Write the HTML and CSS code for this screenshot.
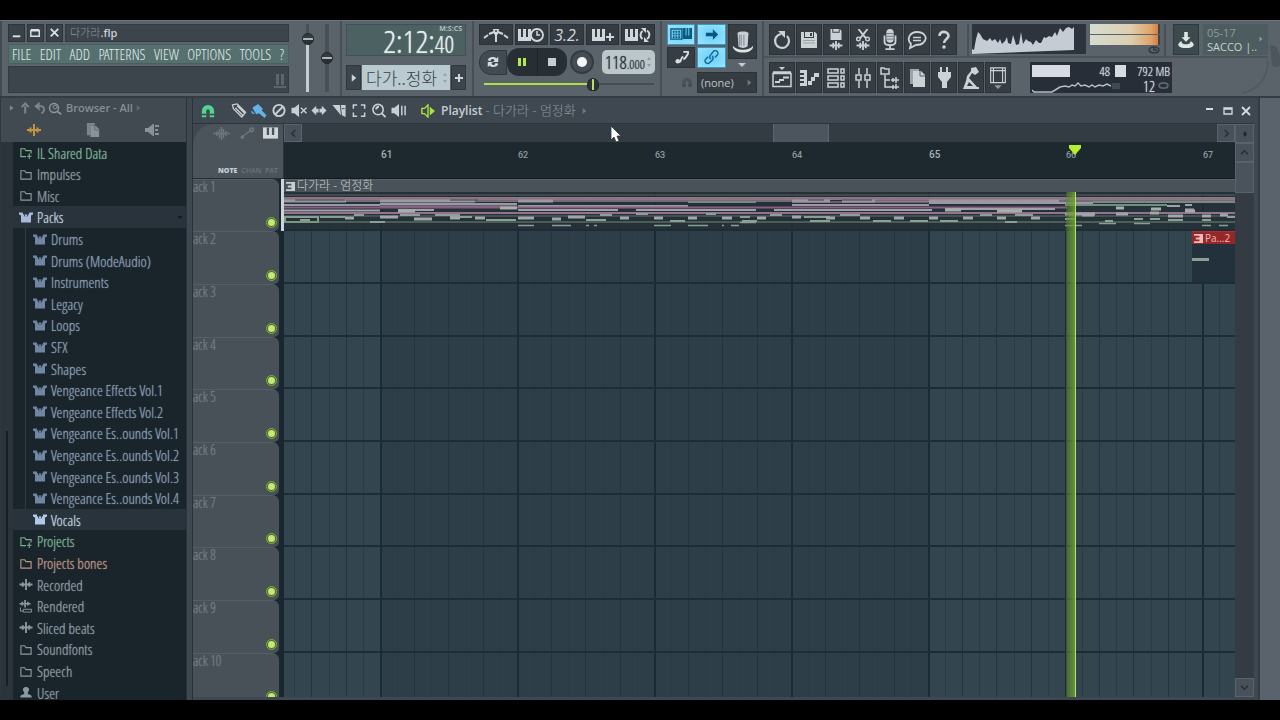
FILE: index.html
```html
<!DOCTYPE html>
<html lang="ko">
<head>
<meta charset="utf-8">
<title>다가라.flp</title>
<link rel="stylesheet" href="styles.css">
</head>
<body>
<svg class="defs" aria-hidden="true">
  <defs>
    <symbol id="folder" viewBox="0 0 14 14"><path d="M1.500 3h4l1.500 2h5.500v7h-11z" fill="none" stroke="currentColor" stroke-width="1.200"/></symbol>
    <symbol id="folderplus" viewBox="0 0 14 14"><path d="M7 11.500H1.500V3h4L7 5h5.500v3M10.500 8v6M8 11h5" fill="none" stroke="currentColor" stroke-width="1.200"/></symbol>
    <symbol id="box" viewBox="0 0 14 12"><path d="M0 1h4l1 2h4l1-2h4v2l-2 1v7H2V4L0 3z" fill="currentColor"/><path d="M4 1l2 4M10 1L8 5" stroke="#1a242b" stroke-width=".8"/></symbol>
    <symbol id="wave" viewBox="0 0 14 14"><path d="M0 7h14M3.500 4.500v5M7 1v12M10.500 4.500v5" fill="none" stroke="currentColor" stroke-width="2"/></symbol>
    <symbol id="rendered" viewBox="0 0 14 14"><path d="M0 4h12M3 2v4M6 0v8M9 2v4" fill="none" stroke="currentColor" stroke-width="1.800"/><path d="M4 10h9v3H4zM1 8v4h3" fill="none" stroke="currentColor"/></symbol>
    <symbol id="user" viewBox="0 0 14 14"><path d="M7 1a3 3 0 0 1 2 5.500v2l3.500 1.500 1 2.500H.5l1-2.500L5 8.500v-2A3 3 0 0 1 7 1z" fill="currentColor"/></symbol>
    <symbol id="piano" viewBox="0 0 16 12"><path d="M0 0h16v12H0z" fill="currentColor"/><path d="M4 0h2.500v8H4zM9.500 0H12v8H9.500z" fill="#4b545c"/></symbol>
    <symbol id="clipicon" viewBox="0 0 10 10"><path d="M0 0h10v10H0V8h6V6H2V4h4V2H0z" fill="currentColor"/></symbol>
    <symbol id="magnet" viewBox="0 0 16 16"><path d="M1 15V8a7 7 0 0 1 14 0v7h-5V8a2 2 0 0 0-4 0v7z" fill="currentColor"/><path d="M1 12h5M10 12h5" stroke="#3c454d" stroke-width="1.500"/></symbol>
  </defs>
</svg>
<div class="app">
  <header class="toolbar">
    <section class="group main-panel">
      <div class="title-row">
        <button class="win-btn" aria-label="Minimize"><svg viewBox="0 0 16 16"><path d="M4 11h8" stroke="currentColor" stroke-width="2"/></svg></button>
        <button class="win-btn" aria-label="Maximize"><svg viewBox="0 0 16 16"><path d="M3 5h9v6H3zM3 4h9" fill="none" stroke="currentColor" stroke-width="1.500"/></svg></button>
        <button class="win-btn" aria-label="Close"><svg viewBox="0 0 16 16"><path d="M4 3l8 8M12 3l-8 8" stroke="currentColor" stroke-width="1.800"/></svg></button>
        <div class="file-title"><span class="ko">다가라</span><b>.flp</b></div>
      </div>
      <nav class="menu">
        <button>FILE</button><button>EDIT</button><button>ADD</button><button>PATTERNS</button><button>VIEW</button><button>OPTIONS</button><button>TOOLS</button><button>?</button>
      </nav>
      <div class="hint"><svg viewBox="0 0 14 16" width="14" height="16"><path d="M3 1h3v11H3zM8 1h3v11H8zM1 13h12v2H1z" fill="#5c656b"/></svg></div>
    </section>
    <section class="group faders">
      <input type="range" class="fader" value="84" aria-label="Main volume">
      <input type="range" class="fader plain" value="50" aria-label="Main pitch">
    </section>
    <section class="group time-panel">
      <div class="clock"><span class="unit">M:S:CS</span><span class="big">2:12:</span><span class="small">40</span></div>
      <div class="pattern">
        <button class="side" aria-label="Pattern menu"><svg viewBox="0 0 8 10" width="6" height="8"><path d="M1 0l6 5-6 5z" fill="currentColor"/></svg></button>
        <button class="pattern-name">다가..정화<svg viewBox="0 0 6 12" width="6" height="12"><path d="M3 1l2 3H1zM3 11l2-3H1z" fill="#93a5a9"/></svg></button>
        <button class="side" aria-label="Add pattern"><svg viewBox="0 0 8 8" width="8" height="8"><path d="M4 0v8M0 4h8" stroke="currentColor" stroke-width="2"/></svg></button>
      </div>
    </section>
    <section class="group transport">
      <div class="modes">
        <button aria-label="Metronome"><svg viewBox="0 0 26 16"><path d="M1 11l4-3M6 7l5-2M15 5l5 2M21 8l4 3M13 7v8" fill="none" stroke="currentColor" stroke-width="2"/><path d="M10 2h6l-1 5-2 2-2-2z" fill="currentColor"/><circle cx="13" cy="4" r="1" fill="#343c42"/></svg></button>
        <button aria-label="Wait for input"><svg viewBox="0 0 26 16"><path d="M0 2h3v8h2V2h3v8h2V2h3v12H0z" fill="currentColor"/><circle cx="19" cy="8" r="6" fill="#343c42" stroke="currentColor" stroke-width="1.800"/><path d="M19 4v4h3" fill="none" stroke="currentColor" stroke-width="1.500"/></svg></button>
        <button class="count" aria-label="Countdown">3.2.</button>
        <button aria-label="Blend notes"><svg viewBox="0 0 26 16"><path d="M2 2h3v8h2V2h3v8h2V2h3v12H2zM19 6h2v3h3v2h-3v3h-2v-3h-3V9h3z" fill="currentColor"/></svg></button>
        <button aria-label="Loop record"><svg viewBox="0 0 26 16"><path d="M0 2h3v8h2V2h3v8h2V2h3v12H0z" fill="currentColor"/><path d="M17.500 12a5 5 0 0 1 0-8M22 3.500a5 5 0 0 1 0 8.500" fill="none" stroke="currentColor" stroke-width="2"/><path d="M16 1h5v5zM24 15h-5v-5z" fill="currentColor"/></svg></button>
      </div>
      <div class="playrow">
        <button class="loop" aria-label="Pattern or song"><svg viewBox="0 0 16 16" width="14" height="14"><path d="M2 6c1-4 7-5 10-2l2-2v6H8l2-2C8 4 6 4 5 7zM14 10c-1 4-7 5-10 2l-2 2V8h6l-2 2c2 2 4 2 5-1z" fill="#d5dcdf"/></svg></button>
        <div class="playstop">
          <button aria-label="Pause"><svg viewBox="0 0 8 8" width="8" height="8"><path d="M0 0h3v8H0zM5 0h3v8H5z" fill="#b4ea4a"/></svg></button>
          <button aria-label="Stop"><svg viewBox="0 0 8 8" width="8" height="8"><path d="M0 0h8v8H0z" fill="#c8cfd3"/></svg></button>
        </div>
        <button class="record" aria-label="Record"><svg viewBox="0 0 10 10" width="10" height="10"><circle cx="5" cy="5" r="5" fill="#f4f7f8"/></svg></button>
        <button class="tempo" aria-label="Tempo">118<small>.000</small><svg viewBox="0 0 6 12" width="6" height="12"><path d="M3 1l2 3H1zM3 11l2-3H1z" fill="#8f9ca2"/></svg></button>
      </div>
      <input class="song-pos" type="range" value="65" aria-label="Song position">
    </section>
    <section class="group links">
      <div class="link-grid">
        <button class="lit" aria-label="Typing keyboard"><svg viewBox="0 0 24 14" width="22" height="13"><path d="M1 1h12v11H1z" fill="none" stroke="#0c5a80" stroke-width="1.500"/><path d="M3 4h9M3 7h9M3 10h9" stroke="#0c5a80" stroke-width="2" stroke-dasharray="2 1"/><path d="M14 0h3v8h1V0h2v8h1V0h3v12H14z" fill="#0c5a80"/></svg></button>
        <button class="lit" aria-label="Auto-scroll"><svg viewBox="0 0 16 12" width="14" height="11"><path d="M1 4h8V0l6 6-6 6V8H1z" fill="#085581"/></svg></button>
        <button class="hat" aria-label="Tips"><svg viewBox="0 0 24 26" width="22" height="24"><path d="M6 3c3-2 9-2 12 0l-1 15c-3 2-7 2-10 0z" fill="#c9d0d3"/><path d="M8 5v12M10 5v12M13 5v12" stroke="#798087"/><path d="M1 17c-1 10 23 10 22 0-4 6-18 6-22 0z" fill="#dde2e4"/></svg></button>
        <button aria-label="Glide"><svg viewBox="0 0 16 14" width="15" height="13"><circle cx="4" cy="11" r="2.500" fill="#d8dee1"/><path d="M5 12c4 0 1-5 5-6M10 1h5v2c-1 1-2 5-5 6" fill="none" stroke="#d8dee1" stroke-width="2"/></svg></button>
        <button class="lit" aria-label="Link"><svg viewBox="0 0 18 18" width="15" height="15"><path d="M8 11l-1-2a3 3 0 0 1 1-3l3-4a3 3 0 0 1 5 4l-3 3M10 7l1 3-1 2-3 3a3 3 0 0 1-5-4l3-3" fill="none" stroke="#126a95" stroke-width="1.700"/></svg></button>
      </div>
      <div class="snap-row">
        <svg class="dim-magnet" width="12" height="11"><use href="#magnet"/></svg>
        <button class="snap">(none)<svg viewBox="0 0 8 10" width="5" height="7"><path d="M1 0l6 5-6 5z" fill="#6d777d"/></svg></button>
      </div>
    </section>
    <section class="group right-side">
      <div class="upper">
        <div class="iconrow">
          <button aria-label="Undo"><svg viewBox="0 0 20 20"><path d="M9 4a7 7 0 1 0 6 2" fill="none" stroke="currentColor" stroke-width="2.200"/><path d="M6 1h7v7z" fill="currentColor"/></svg></button>
          <button aria-label="Save"><svg viewBox="0 0 20 20"><path d="M2 2h3v6h10V2h1l2 2v14H2z" fill="currentColor"/><path d="M6 2h8v5H6z" fill="currentColor"/><path d="M11 3h2v3h-2z" fill="#3a4248"/><path d="M4 10.500h12M4 13h12" stroke="#9aa3a8"/></svg></button>
          <button aria-label="Save new version"><svg viewBox="0 0 20 24"><path d="M4 0h2v4h8V0l2 2v10H4z" fill="currentColor"/><path d="M7 0h6v3H7z" fill="currentColor"/><path d="M3 18h14M7 15v6M10 13v10M13 15v6" stroke="currentColor" stroke-width="2"/></svg></button>
          <button aria-label="Cut audio"><svg viewBox="0 0 20 24"><path d="M5 0l8 10M15 0L7 10" stroke="currentColor" stroke-width="2"/><circle cx="5" cy="11" r="2" fill="none" stroke="currentColor" stroke-width="1.500"/><circle cx="15" cy="11" r="2" fill="none" stroke="currentColor" stroke-width="1.500"/><path d="M3 18h14M7 15v6M10 13v10M13 15v6" stroke="currentColor" stroke-width="2"/></svg></button>
          <button aria-label="Record audio"><svg viewBox="0 0 20 24"><rect x="6" y="0" width="8" height="15" rx="4" fill="currentColor"/><path d="M6 5h8M6 8h8M6 11h8" stroke="#69727a"/><path d="M4 7v7c0 5 12 5 12 0V7M10 18v3M5 22h10" fill="none" stroke="currentColor" stroke-width="2"/></svg></button>
          <button aria-label="Messages"><svg viewBox="0 0 20 20"><path d="M4 14C-1 9 3 2 10 2s12 6 6 11c-2 2-5 2-7 2l-6 3z" fill="none" stroke="currentColor" stroke-width="1.800"/><path d="M6 7.500h8M6 10.500h8" stroke="currentColor" stroke-width="1.500"/></svg></button>
          <button aria-label="Help"><svg viewBox="0 0 20 20"><path d="M5.500 6c0-6 9-5 9 0 0 3-4.500 3-4.500 7" fill="none" stroke="currentColor" stroke-width="2.600"/><circle cx="10" cy="17" r="1.800" fill="currentColor"/></svg></button>
        </div>
        <div class="monitor">
          <svg class="spectrum" viewBox="0 0 114 30"><path d="M0 30V25l2 1 2-11 2-7 2 2 3 5 4 2 3-3 2 3 3-2 3 4 2-4 2 5 3-3 2-4 1 6 3 1 2-9 2 6 1 4 3-1 2-12 2 12 3-5 2 2 3 1 2 3 3-5 3 3 2 0 3-6 2 1 3-2 3 1 3-5 2 4 3-8 3 4 3-4 3-1 3 2 2-2v23z" fill="#c5ccd4"/></svg>
          <div class="meters"><i></i><i></i><svg viewBox="0 0 12 8" width="12" height="8"><path d="M1 4c1-4 9-4 10 0-1 4-9 4-10 0M6 1v3h3" fill="none" stroke="#333b42" stroke-width="1.500"/></svg></div>
        </div>
        <div class="news">
          <button class="download" aria-label="Download"><svg viewBox="0 0 20 22" width="18" height="20"><path d="M8 2h4v6h3l-5 5-5-5h3z" fill="currentColor"/><path d="M5 12c-8 5-1 8 5 8s13-3 5-8c1 5-11 5-10 0z" fill="currentColor"/></svg></button>
          <button class="news-text"><span class="date">05-17</span><span>SACCO |..</span><svg viewBox="0 0 8 10" width="4" height="6"><path d="M1 0l6 5-6 5z" fill="#8c999d"/></svg></button>
        </div>
      </div>
      <div class="lower">
        <div class="iconrow">
          <button aria-label="Playlist"><svg viewBox="0 0 20 22"><path d="M7 0h6l-3 3z" fill="currentColor"/><path d="M1 6.500h18v13H1zM1 5h18" fill="none" stroke="currentColor" stroke-width="1.500"/><path d="M3 15h5M7 13h5M11 10.500h6" stroke="currentColor" stroke-width="2"/></svg></button>
          <button aria-label="Piano roll"><svg viewBox="0 0 20 22"><path d="M1 3h7v16H1v-3h4v-2H1v-2h4v-2H1V8h4V6H1z" fill="currentColor"/><path d="M9 16h4M12 12h4M15 8h5" stroke="currentColor" stroke-width="4"/></svg></button>
          <button aria-label="Channel rack"><svg viewBox="0 0 20 22"><path d="M2 2h10v4H2zM2 9h10v4H2zM2 16h10v4H2zM15 2h3v4h-3zM15 9h3v4h-3zM15 16h3v4h-3z" fill="none" stroke="currentColor" stroke-width="1.500"/></svg></button>
          <button aria-label="Mixer"><svg viewBox="0 0 20 22"><path d="M6 1v6M6 14v7M14 1v6M14 14v7M3 8h5v5H3zM12 8h5v5h-5z" fill="none" stroke="currentColor" stroke-width="1.500"/></svg></button>
          <button aria-label="Browser"><svg viewBox="0 0 20 22"><path d="M1 1h3l1 1h4v5H1zM5 8v12h6M5 13h5" fill="none" stroke="currentColor" stroke-width="1.500"/><path d="M11 13h8M13 11v4M16 10v6M11 20h8M13 18v4M16 17v5" stroke="currentColor" stroke-width="1.500"/></svg></button>
          <button aria-label="Project picker"><svg viewBox="0 0 20 22"><path d="M3 2h9v3H7v12H3z" fill="#9da5aa"/><path d="M6 4h8l4 4v12H6z" fill="currentColor"/><path d="M13 4v5h5" fill="none" stroke="#59626a"/></svg></button>
          <button aria-label="Plugin picker"><svg viewBox="0 0 20 22"><path d="M6 0h2v5h4V0h2v5h3v5l-4 5v6H8v-6l-4-5V5h2z" fill="currentColor"/></svg></button>
          <button aria-label="Tempo tapper"><svg viewBox="0 0 20 22"><path d="M10 1l5-1 3 5-4 3-3-2-3 5 8 9h2v2H2l3-8 1-5 4-5z" fill="currentColor"/><path d="M6 19l2-4 4 4z" fill="#363e44"/></svg></button>
          <button aria-label="Touch control"><svg viewBox="0 0 20 24"><path d="M2 1h16v16H2zM5 1v16M15 1v16M2 4h16" fill="none" stroke="currentColor" stroke-width="1.200"/><path d="M6 20h8l-4 4z" fill="#939ba0"/></svg></button>
        </div>
        <div class="cpu">
          <div class="cpu-line"><i class="bar"></i><span>48</span><i class="mem"></i><span class="mb">792 MB</span></div>
          <div class="cpu-line"><svg viewBox="0 0 80 14" width="80" height="14"><path d="M0 11l2 2h18l8-5 5-1 4 1 3-2 3 1 3-3 3 3 4-1 4 2 3-2 3 2 4-2 4 1 4-2 4 2" fill="none" stroke="#b4bdc5" stroke-width="1.500"/></svg><svg viewBox="0 0 8 6" width="8" height="6"><path d="M0 1h8M0 3h8M0 5h8" stroke="#59646c"/></svg><span class="voices">12</span><svg viewBox="0 0 14 8" width="13" height="7"><path d="M2 4c0-4 10-4 10 0s-10 4-10 0" fill="none" stroke="#5c6972" stroke-width="2"/></svg></div>
        </div>
      </div>
      <svg class="edge" viewBox="0 0 40 60" width="40" height="60"><path d="M30 10c6 0 10 4 10 18 0 6-5 4-8 2z" fill="#4d565d"/><path d="M28 26C28 44 16 56 2 58" fill="none" stroke="#4f585f" stroke-width="1.500"/></svg>
    </section>
  </header>

  <main class="workspace">
    <aside class="browser">
      <div class="browser-head">
        <svg viewBox="0 0 60 14" width="54" height="14"><path d="M1 4l4 3-4 3z" fill="#7b858b"/><path d="M18 13V5M14 6l4-4 4 4" fill="none" stroke="#7b858b" stroke-width="2.200"/><path d="M31 5h4c5 0 5 6 1 8" fill="none" stroke="#7b858b" stroke-width="2"/><path d="M34 0v10l-6-5z" fill="#7b858b"/><circle cx="50" cy="7" r="5" fill="none" stroke="#8d979d" stroke-width="1.600"/><circle cx="51" cy="6" r="2" fill="none" stroke="#8d979d"/><path d="M54 11l4 3" stroke="#8d979d" stroke-width="2"/></svg>
        <span>Browser - All</span>
        <svg viewBox="0 0 8 10" width="5" height="6"><path d="M1 0l6 5-6 5z" fill="#5f696f"/></svg>
      </div>
      <div class="browser-tabs">
        <button class="gold" aria-label="Sounds"><svg width="14" height="14"><use href="#wave"/></svg></button>
        <button aria-label="Files"><svg viewBox="0 0 16 18" width="14" height="16"><path d="M1 1h9v3H5v11H1z" fill="#7a848a"/><path d="M5 4h6l4 4v9H5z" fill="currentColor"/><path d="M10 4v5h5" fill="none" stroke="#59626a"/></svg></button>
        <button aria-label="Plugins"><svg viewBox="0 0 16 14" width="16" height="14"><path d="M0 5h3l5-4h1v12H8L3 9H0zM10 2h4v2h-4zM10 6h3v2h-3zM10 10h4v2h-4z" fill="currentColor"/></svg></button>
      </div>
      <div class="browser-body">
        <div class="browser-scroll"><i></i></div>
        <ul class="tree">
          <li class="green"><svg><use href="#folderplus"/></svg><span>IL Shared Data</span></li>
          <li><svg><use href="#folder"/></svg><span>Impulses</span></li>
          <li><svg><use href="#folder"/></svg><span>Misc</span></li>
          <li class="selected"><svg><use href="#box"/></svg><span>Packs</span><em></em></li>
          <li class="child"><svg><use href="#box"/></svg><span>Drums</span></li>
          <li class="child"><svg><use href="#box"/></svg><span>Drums (ModeAudio)</span></li>
          <li class="child"><svg><use href="#box"/></svg><span>Instruments</span></li>
          <li class="child"><svg><use href="#box"/></svg><span>Legacy</span></li>
          <li class="child"><svg><use href="#box"/></svg><span>Loops</span></li>
          <li class="child"><svg><use href="#box"/></svg><span>SFX</span></li>
          <li class="child"><svg><use href="#box"/></svg><span>Shapes</span></li>
          <li class="child"><svg><use href="#box"/></svg><span>Vengeance Effects Vol.1</span></li>
          <li class="child"><svg><use href="#box"/></svg><span>Vengeance Effects Vol.2</span></li>
          <li class="child"><svg><use href="#box"/></svg><span>Vengeance Es..ounds Vol.1</span></li>
          <li class="child"><svg><use href="#box"/></svg><span>Vengeance Es..ounds Vol.2</span></li>
          <li class="child"><svg><use href="#box"/></svg><span>Vengeance Es..ounds Vol.3</span></li>
          <li class="child"><svg><use href="#box"/></svg><span>Vengeance Es..ounds Vol.4</span></li>
          <li class="child selected"><svg><use href="#box"/></svg><span>Vocals</span></li>
          <li class="green"><svg><use href="#folderplus"/></svg><span>Projects</span></li>
          <li class="orange"><svg><use href="#folder"/></svg><span>Projects bones</span></li>
          <li><svg><use href="#wave"/></svg><span>Recorded</span></li>
          <li><svg><use href="#rendered"/></svg><span>Rendered</span></li>
          <li><svg><use href="#wave"/></svg><span>Sliced beats</span></li>
          <li><svg><use href="#folder"/></svg><span>Soundfonts</span></li>
          <li><svg><use href="#folder"/></svg><span>Speech</span></li>
          <li><svg><use href="#user"/></svg><span>User</span></li>
        </ul>
      </div>
    </aside>

    <section class="playlist">
      <div class="pl-head">
        <button class="mint" aria-label="Snap"><svg width="14" height="14" viewBox="0 0 16 16"><use href="#magnet"/></svg></button>
        <div class="tools">
          <button aria-label="Draw"><svg viewBox="0 0 16 16"><path d="M1 2l5-1 9 9-4 5-9-9zM4 5l8 8M6 3l8 8" fill="none" stroke="currentColor" stroke-width="1.400"/></svg></button>
          <button class="blue" aria-label="Paint"><svg viewBox="0 0 16 16"><path d="M1 5l6-4 5 5-1 2 5 5-2 3-6-5-3 1zM0 8l4 4-4-1z" fill="currentColor"/></svg></button>
          <button aria-label="Delete"><svg viewBox="0 0 16 16"><circle cx="8" cy="8" r="6" fill="none" stroke="currentColor" stroke-width="2"/><path d="M4 12l8-8" stroke="currentColor" stroke-width="2"/></svg></button>
          <button aria-label="Mute"><svg viewBox="0 0 16 16"><path d="M0 5h3l5-4v14l-5-4H0z" fill="currentColor"/><path d="M10 5l6 6M16 5l-6 6" stroke="currentColor" stroke-width="1.500"/></svg></button>
          <button aria-label="Slip"><svg viewBox="0 0 16 16"><path d="M0 8l5-5v3h6V3l5 5-5 5v-3H5v3z" fill="currentColor"/><path d="M8 4v8" stroke="#3f4850"/></svg></button>
          <button aria-label="Slice"><svg viewBox="0 0 16 16"><path d="M1 2h8l1 11zM10 2h5v13l-4-2z" fill="currentColor"/><path d="M11 6h3" stroke="#3f4850"/></svg></button>
          <button aria-label="Select"><svg viewBox="0 0 16 16"><path d="M2 6V2h4M10 2h4v4M14 10v4h-4M6 14H2v-4" fill="none" stroke="currentColor" stroke-width="1.600"/></svg></button>
          <button aria-label="Zoom"><svg viewBox="0 0 16 16"><circle cx="7" cy="7" r="5.500" fill="none" stroke="currentColor" stroke-width="1.700"/><path d="M5 7a3 3 0 0 1 3-3M11 11l4 4" fill="none" stroke="currentColor" stroke-width="2"/></svg></button>
          <button aria-label="Play selection"><svg viewBox="0 0 16 16"><path d="M0 5h3l5-4v14l-5-4H0z" fill="currentColor"/><path d="M11 3v10M14.500 3v10" stroke="currentColor" stroke-width="1.600"/></svg></button>
        </div>
        <svg class="lime" viewBox="0 0 16 16" width="14" height="14"><path d="M1 5h3l4-4v14l-4-4H1z" fill="none" stroke="currentColor" stroke-width="1.600"/><path d="M10 3l6 5-6 5z" fill="currentColor"/></svg>
        <h1>Playlist <span>- 다가라 - 엄정화</span></h1>
        <svg viewBox="0 0 8 10" width="5" height="6"><path d="M1 0l6 5-6 5z" fill="#6c777d"/></svg>
        <div class="pl-window">
          <button aria-label="Minimize"><svg viewBox="0 0 10 10"><path d="M1 3h7" stroke="currentColor" stroke-width="2"/></svg></button>
          <button aria-label="Maximize"><svg viewBox="0 0 10 10"><path d="M1 2h8v6H1zM1 3h8" fill="none" stroke="currentColor" stroke-width="1.300"/></svg></button>
          <button aria-label="Close"><svg viewBox="0 0 10 10"><path d="M1 1l8 8M9 1L1 9" stroke="currentColor" stroke-width="1.800"/></svg></button>
        </div>
      </div>
      <div class="pl-body">
        <div class="corner">
          <div class="corner-icons">
            <svg width="17" height="13" viewBox="0 0 17 13"><path d="M0 6.500h17M4 4v5M6.500 2v9M8.500 0v13M10.500 2v9M13 4v5" stroke="currentColor" stroke-width="1.500"/></svg>
            <svg viewBox="0 0 16 14" width="16" height="13"><path d="M2 11L13 3" stroke="currentColor" stroke-width="1.500"/><circle cx="3" cy="11" r="2" fill="currentColor"/><circle cx="13" cy="3" r="2" fill="none" stroke="currentColor" stroke-width="1.500"/></svg>
            <svg class="on" width="15" height="12"><use href="#piano"/></svg>
          </div>
          <div class="corner-modes"><b>NOTE</b><span>CHAN</span><span>PAT</span></div>
        </div>
        <div class="hscroll">
          <button aria-label="Scroll left"><svg viewBox="0 0 8 10" width="7" height="9"><path d="M6 1L2 5l4 4" fill="none" stroke="#252d35" stroke-width="1.500"/></svg></button>
          <div class="hbar"><i></i></div>
          <button aria-label="Scroll right"><svg viewBox="0 0 8 10" width="7" height="9"><path d="M2 1l4 4-4 4" fill="none" stroke="#252d35" stroke-width="1.500"/></svg></button>
        </div>
        <button class="dot" aria-label="Zoom"><svg viewBox="0 0 4 6" width="4" height="6"><path d="M2 0l2 3-2 3-2-3z" fill="#20272e"/></svg></button>
        <div class="ruler"><b>61</b><span>62</span><span>63</span><span>64</span><b>65</b><span>66</span><span>67</span>
          <svg class="marker" viewBox="0 0 14 10" width="14" height="10"><path d="M1 0h12v3L7 10 1 3z" fill="#b5f02c"/></svg>
        </div>
        <div class="vscroll">
          <button aria-label="Scroll up"><svg viewBox="0 0 10 8" width="9" height="7"><path d="M1 6l4-4 4 4" fill="none" stroke="#252d35" stroke-width="1.500"/></svg></button>
          <i></i>
          <button class="down" aria-label="Scroll down"><svg viewBox="0 0 10 8" width="9" height="7"><path d="M1 2l4 4 4-4" fill="none" stroke="#252d35" stroke-width="1.500"/></svg></button>
        </div>
        <div class="tracks">
          <div class="track"><div class="head"><span>ack 1</span><button class="led" aria-label="Mute track 1"></button></div>
            <div class="lane first">
              <div class="clip">
                <div class="clip-title"><svg width="9" height="9" viewBox="0 0 10 10"><use href="#clipicon"/></svg>다가라 - 엄정화</div>
                <svg class="notes" viewBox="284 192 951 38" width="951" height="38">
                  <path d="M284 195h951" stroke="#59655b"/>
                  <path d="M284 198.500h951" stroke="#8d7585" stroke-width="3"/>
                  <path d="M284 201h62M380 201h95M518 201h35M792 201h38M842 201h33M929 201h130" stroke="#9b979e" stroke-width="3"/>
                  <path d="M346 201h34M475 201h43M553 201h239M875 201h54M1059 201h176" stroke="#736c78" stroke-width="2"/>
                  <path d="M295 200h50M450 200h28M808 200h16M842 200h30" stroke="#3d444b"/>
                  <path d="M284 205h96M380 204h137M518 206h170M792 205h137M929 203h164" stroke="#969ba0" stroke-width="2"/>
                  <path d="M688 202h68M1065 205h102M1093 202h142" stroke="#768c7e" stroke-width="2"/>
                  <path d="M284 207.500h783" stroke="#865f80" stroke-width="2"/>
                  <path d="M284 210.500h96M398 210h36M518 210h100M636 210h120M774 210h18M792 210h140M945 209h110M1167 206h13M1185 205h7" stroke="#a1a0a8" stroke-width="2"/>
                  <path d="M380 206h137M792 202h137" stroke="#b08aa8"/>
                  <path d="M284 213h951" stroke="#95728f" stroke-width="2"/>
                  <path d="M398 211h17M500 208h17M945 210h16M997 211h25M1116 208h8M1151 209h10M1185 211h10" stroke="#a6b0a8" stroke-width="3"/>
                  <path d="M284 216h951" stroke="#5d7564"/>
                  <path d="M285 217h33v5h-33zM320 217h25M450 217h22M740 217h10M804 217h26" fill="none" stroke="#88a18e" stroke-width="2"/>
                  <path d="M284 222h951" stroke="#708975"/>
                  <path d="M345 218h9M380 217h18M414 219h18M450 218h10M475 218h10M518 218h16M552 219h9M568 217h17M620 218h9M654 218h9M688 218h9M722 218h10M757 218h9M792 217h9M826 218h9M860 218h10M894 218h10M929 218h9M963 218h10M997 218h9M1031 218h9M1065 214h30M1082 215h12M1116 214h12M1150 213h9M1168 216h15M1185 210h9M1202 216h9M1220 215h8" stroke="#a3a5a9" stroke-width="3"/>
                  <path d="M300 220h10M354 215h10M370 222h15M400 215h20M435 215h25M486 220h30M586 220h20M600 215h12M636 214h12M670 221h15M706 214h10M742 221h15M770 215h12M810 221h20M840 215h20M873 221h18M910 221h18M940 221h18M980 215h12M1005 222h12M1015 215h18M1065 219h10M1105 221h8M1134 219h9M1150 219h10M1168 220h15M1202 220h9M1227 217h8" stroke="#8e9f95" stroke-width="2"/>
                  <path d="M518 225.500h16M552 225.500h19M586 225.500h3M594 225.500h3M654 225.500h17M688 225.500h20M722 225.500h2M731 225.500h8M740 222.500h16M1065 225.500h17M1099 223.500h17M1134 223.500h16M1202 225.500h9M1219 225.500h9" stroke="#86a190" stroke-width="1.500"/>
                </svg>
              </div>
            </div></div>
          <div class="track"><div class="head"><span>ack 2</span><button class="led" aria-label="Mute track 2"></button></div>
            <div class="lane"><div class="clip red"><div class="clip-title"><svg width="9" height="9" viewBox="0 0 10 10"><use href="#clipicon"/></svg>Pa...2</div><i></i></div></div></div>
          <div class="track"><div class="head"><span>ack 3</span><button class="led" aria-label="Mute track 3"></button></div><div class="lane"></div></div>
          <div class="track"><div class="head"><span>ack 4</span><button class="led" aria-label="Mute track 4"></button></div><div class="lane"></div></div>
          <div class="track"><div class="head"><span>ack 5</span><button class="led" aria-label="Mute track 5"></button></div><div class="lane"></div></div>
          <div class="track"><div class="head"><span>ack 6</span><button class="led" aria-label="Mute track 6"></button></div><div class="lane"></div></div>
          <div class="track"><div class="head"><span>ack 7</span><button class="led" aria-label="Mute track 7"></button></div><div class="lane"></div></div>
          <div class="track"><div class="head"><span>ack 8</span><button class="led" aria-label="Mute track 8"></button></div><div class="lane"></div></div>
          <div class="track"><div class="head"><span>ack 9</span><button class="led" aria-label="Mute track 9"></button></div><div class="lane"></div></div>
          <div class="track"><div class="head"><span>ack 10</span><button class="led" aria-label="Mute track 10"></button></div><div class="lane"></div></div>
          <div class="playhead"></div>
        </div>
      </div>
    </section>
    <div class="desk"></div>
  </main>
</div>
<svg class="cursor" viewBox="0 0 12 18" width="12" height="18"><path d="M1 1v14l3-3 2 5 3-1-2-5h4z" fill="#fff" stroke="#30353a" stroke-width=".8"/></svg>
</body>
</html>
```
FILE: styles.css
```css
* { box-sizing: border-box; }
body {
  margin: 0;
  height: 100vh;
  padding: 20px 0;
  background: #000;
  overflow: hidden;
  font: 14px/16px "Open Sans Condensed Light", "Roboto Condensed", "Open Sans", "Noto Sans CJK KR", sans-serif;
  color: #c9d1d5;
}
button { font: inherit; color: inherit; background: none; border: 0; padding: 0; margin: 0; }
button svg { display: block; }
.defs { position: absolute; width: 0; height: 0; }
.app { height: 100%; display: flex; flex-direction: column; overflow: hidden; background: #3f4850; }

/* toolbar */
.toolbar { display: flex; height: 78px; flex: none; background: #5a636a; border-top: 1px solid #6b747a; border-bottom: 2px solid #343c43; }
.group { padding-top: 3px; flex: none; }
.main-panel { width: 292px; padding-left: 6px; padding-right: 3px; display: flex; flex-direction: column; gap: 2px; border-left: 2px solid #434b52; }
.title-row { display: flex; gap: 2px; height: 18px; }
.win-btn { width: 17px; background: #3a4249; border: 1px solid #2d343a; color: #dce2e5; }
.win-btn svg { width: 15px; height: 15px; }
.file-title { flex: 1; background: #3c444c; border: 1px solid #333a41; padding-left: 4px; font: 11px/15px "Open Sans", sans-serif; color: #c9d0d4; }
.ko { font-family: "Noto Sans CJK KR", sans-serif; color: #8e979c; font-weight: 300; }
.file-title b { font-weight: 600; }
.menu { display: flex; justify-content: space-between; height: 20px; padding: 0 4px 0 3px; background: #55706f; border: 1px solid #486060; color: #e2edeb; font-size: 15px; line-height: 18px; text-shadow: 0 0 1px currentColor; }
.hint { height: 27px; background: #3c444c; border: 1px solid #333a41; display: flex; justify-content: flex-end; align-items: flex-end; padding: 3px 1px; }
.faders { width: 48px; padding-left: 8px; display: flex; gap: 4px; }
.fader { -webkit-appearance: none; appearance: none; writing-mode: vertical-lr; direction: rtl; width: 15px; height: 68px; margin: 0; background: linear-gradient(#484f56, #484f56) center/4px 100% no-repeat; }
.fader:not(.plain) { background: linear-gradient(#484f56 24%, #c6cccf 24%) center/3px 100% no-repeat; }
.fader::-webkit-slider-thumb { -webkit-appearance: none; width: 12px; height: 12px; border-radius: 50%; border: 1px solid #20262b; background: linear-gradient(#343b41 40%, #aeb6ba 40%, #aeb6ba 55%, #2b3237 55%); }
.time-panel, .transport, .links, .right-side { border-left: 2px solid #484f57; }
.time-panel { width: 132px; padding-left: 4px; padding-right: 6px; }
.clock { position: relative; height: 32px; background: #4b6162; border: 1px solid #3f5153; display: flex; justify-content: flex-end; align-items: baseline; padding-right: 11px; color: #e2edeb; text-shadow: 0 0 1px currentColor; }
.clock .big { font-size: 32px; line-height: 31px; }
.clock .small { font-size: 24px; line-height: 28px; }
.unit { position: absolute; right: 3px; top: 0; font: bold 7px/8px "Open Sans", sans-serif; color: #aebdbc; text-shadow: none; }
.pattern { display: flex; margin-top: 9px; height: 25px; gap: 1px; }
.side { width: 15px; background: #3d454c; border: 1px solid #30373d; display: grid; place-items: center; color: #cdd4d7; }
.pattern-name { flex: 1; background: #b9cbd1; color: #3a4247; font: 300 17px/24px "Noto Sans CJK KR", sans-serif; display: flex; justify-content: space-between; align-items: center; padding: 0 2px 0 4px; white-space: nowrap; }
.transport { width: 188px; padding: 3px 5px 0 5px; }
.modes { display: flex; gap: 2px; height: 21px; }
.modes button { flex: 1; background: #343c42; border: 1px solid #2a3137; display: grid; place-items: center; color: #d1d8db; }
.modes svg { width: 26px; height: 16px; }
.modes .count { font: italic 16px/18px "Open Sans", sans-serif; }
.playrow { display: flex; align-items: center; height: 28px; margin-top: 3px; }
.playrow button { display: grid; place-items: center; }
.loop { width: 28px; height: 25px; border-radius: 12px 0 0 12px; background: #434b52; border: 1px solid #30373d; }
.playstop { display: flex; flex: none; width: 60px; height: 28px; border-radius: 12px; background: #272f35; overflow: hidden; margin-right: 3px; }
.playstop button { flex: 1; }
.playstop button + button { border-left: 1px solid #1d2328; }
.playrow .record { flex: none; width: 24px; height: 24px; border-radius: 50%; background: #454d54; border: 2px solid #343b42; margin-right: 8px; }
.playrow .tempo { flex: 1; min-width: 0; height: 24px; border-radius: 5px; background: #bcc7cc; color: #2b3339; display: flex; justify-content: center; align-items: center; font-size: 18px; text-shadow: 0 0 1px currentColor; }
.tempo small { font-size: 13px; padding-top: 4px; }
.tempo svg { margin-left: 1px; }
.song-pos { -webkit-appearance: none; appearance: none; display: block; width: 170px; height: 14px; margin: 1px 5px 0; background: linear-gradient(90deg, #aede49 65%, #454d54 65%) center/100% 2px no-repeat; }
.song-pos::-webkit-slider-thumb { -webkit-appearance: none; width: 12px; height: 13px; border-radius: 50% 50% 40% 40%; border: 1px solid #1f262b; background: linear-gradient(90deg, #2c3439 45%, #b7de6b 45%, #b7de6b 60%, #2c3439 60%); }
.links { width: 102px; padding-left: 5px; padding-right: 5px; }
.link-grid { display: grid; grid-template-columns: 28px 29px 29px; grid-template-rows: 21px 21px; gap: 2px; }
.link-grid button { background: #363e44; border: 1px solid #2b3238; display: grid; place-items: center; }
.link-grid .lit { background: radial-gradient(#69ccf7, #98e6ff); border-color: #3f95bd; }
.link-grid .hat { grid-row: 1 / 3; grid-column: 3; height: 35px; position: relative; }
.hat::after { content: ""; position: absolute; top: 38px; left: 9px; border: 4px solid transparent; border-top-color: #c3cacd; border-bottom: 0; }
.snap-row { display: flex; align-items: center; gap: 4px; margin-top: 4px; padding-left: 14px; }
.dim-magnet { color: #4a5258; }
.snap { flex: 1; height: 21px; display: flex; align-items: center; justify-content: space-between; padding: 0 4px 0 3px; background: #353d43; border: 1px solid #2b3238; font: 11px/18px "Open Sans", sans-serif; color: #bcc4c8; }
.right-side { flex: 1; padding-top: 0; position: relative; }
.edge { position: absolute; right: 0; top: 14px; }
.upper, .lower { display: flex; padding-left: 5px; }
.upper { height: 37px; padding-top: 3px; border-bottom: 2px solid #4c545b; width: 504px; }
.lower { height: 38px; padding-top: 4px; }
.iconrow { display: flex; gap: 1px; height: 31px; flex: none; }
.iconrow button { width: 26px; background: #363e44; border: 1px solid #2b3238; display: grid; place-items: center; color: #ccd3d6; }
.iconrow svg { width: 20px; height: 22px; }
.monitor { display: flex; gap: 4px; margin-left: 10px; border-left: 2px solid #484f57; padding-left: 3px; width: 197px; }
.spectrum { width: 114px; height: 30px; background: #2d343d; }
.meters { display: flex; flex-direction: column; gap: 1px; }
.meters i { width: 70px; height: 10px; border-right: 2px solid #4b423d; background: linear-gradient(90deg, #d6dcd1, #ddceb0 60%, #dfa467 90%, #d27f45); }
.meters svg { align-self: flex-end; }
.news { display: flex; gap: 4px; border-left: 2px solid #484f57; padding-left: 7px; flex: 1; }
.download { width: 26px; height: 31px; background: #3c4a4d; border: 1px solid #2f383c; display: grid; place-items: center; color: #dce6e5; }
.news-text { position: relative; flex: 1; height: 31px; background: #4d5d5f; text-align: left; padding-left: 4px; font: 11px/14px "Open Sans", sans-serif; color: #c6d1d1; white-space: nowrap; overflow: hidden; }
.news-text span { display: block; }
.news-text .date { color: #8a9b9c; }
.news-text svg { position: absolute; right: 5px; top: 12px; }
.cpu { width: 142px; height: 31px; margin-left: 19px; background: #272e37; padding: 1px 2px; flex: none; }
.cpu-line { display: flex; align-items: center; height: 15px; color: #d5dde2; font-size: 13px; line-height: 14px; text-shadow: 0 0 1px currentColor; }
.cpu .bar { width: 38px; height: 12px; background: #d7dce2; }
.cpu .mem { width: 11px; height: 12px; background: #d7dce2; margin-left: 5px; }
.cpu-line span { flex: 1; text-align: right; }
.cpu-line .mb { flex: 0 0 44px; }
.cpu-line .voices { font-size: 15px; margin-right: 2px; }

/* browser */
.workspace { flex: 1; min-height: 0; display: flex; }
.browser { width: 187px; flex: none; display: flex; flex-direction: column; border-right: 1px solid #2c343b; border-left: 1px solid #2f373e; background: #414a51; }
.browser-head { display: flex; align-items: center; gap: 3px; height: 20px; padding-left: 8px; font: 600 11px/16px "Open Sans", sans-serif; color: #858f95; }
.browser-tabs { display: grid; grid-template-columns: 1fr 1fr 1fr; height: 24px; padding: 0 3px; align-items: center; justify-items: center; color: #899299; }
.browser-tabs .gold { color: #c69440; }
.browser-body { flex: 1; min-height: 0; display: flex; }
.browser-scroll { width: 12px; background: #2b333b; padding: 289px 0 14px 5px; }
.browser-scroll i { display: block; width: 2px; height: 100%; background: #161d24; }
.tree { list-style: none; margin: 0; padding: 0; flex: 1; min-width: 0; background: #1a242b; overflow: hidden; }
.tree li { display: flex; align-items: center; gap: 4px; height: 22px; padding-left: 6px; color: #8b9aa1; white-space: nowrap; font-size: 15px; text-shadow: 0 0 1px currentColor; }
.tree li:nth-child(5n+1), .tree li:nth-child(5n+3) { height: 21px; }
.tree li svg { width: 14px; height: 13px; flex: none; }
.tree .green { color: #7bb192; }
.tree .orange { color: #bd9584; }
.tree .child { margin-left: 12px; padding-left: 7px; color: #7186a5; border-left: 1px solid #303b43; }
.tree .child span { color: #869aae; }
.tree .selected { color: #a6badb; background: #29333b; }
.tree .selected span, .tree .child.selected span { color: #bccddb; }
.tree .selected em { margin: 0 3px 0 auto; border: 3px solid transparent; border-top-color: #151d23; border-bottom: 0; }
.tree .child.selected { color: #b4c8e8; margin-left: 0; padding-left: 19px; border-left: 1px solid #29333b; }

/* playlist */
.playlist { flex: 1; min-width: 0; margin-left: 5px; display: flex; flex-direction: column; border-left: 1px solid #29323a; background: #3f4850; padding: 0 4px 3px 0; }
.pl-head { display: flex; align-items: center; height: 25px; padding: 0 3px 0 8px; }
.mint { color: #52d58e; margin-right: 16px; }
.tools { display: flex; gap: 4px; color: #c8cfd3; margin-right: 14px; }
.tools svg { width: 16px; height: 15px; }
.tools .blue { color: #63b4e6; }
.lime { color: #aae33b; margin-right: 6px; }
.pl-head h1 { margin: 0 6px 0 0; font: 600 12px/18px "Open Sans", "Noto Sans CJK KR", sans-serif; color: #c6cdd1; }
.pl-head h1 span { font-size: 13px; font-weight: 300; color: #8c969b; }
.pl-window { margin-left: auto; display: flex; gap: 8px; color: #d4dadd; }
.pl-window svg { width: 10px; height: 10px; }
.pl-body { flex: 1; min-height: 0; display: grid; grid-template-columns: 91px minmax(0, 1fr) 19px; grid-template-rows: 19px 36px minmax(0, 1fr); border-top: 1px solid #2c353c; }
.corner { grid-row: 1 / 3; background: #4b545b; border-top-left-radius: 20px 22px; border-bottom: 1px solid #262e35; border-right: 1px solid #2b343b; display: flex; flex-direction: column; justify-content: space-between; padding: 3px 5px 3px 20px; }
.corner-icons { display: flex; justify-content: space-between; color: #6d767c; }
.corner-icons .on { color: #d1d7da; }
.corner-modes { display: flex; justify-content: space-between; padding-left: 5px; font: 600 7px/9px "Open Sans", sans-serif; color: #6b747a; }
.corner-modes b { color: #c7ced1; }
.hscroll { display: flex; background: #343c43; border-bottom: 1px solid #232b32; }
.hscroll button, .dot, .vscroll button { display: grid; place-items: center; background: #485159; border: 1px solid #59626a; }
.hscroll button { width: 18px; }
.hbar { flex: 1; display: flex; justify-content: flex-end; padding-right: 388px; }
.hbar i { width: 56px; background: #4c555d; border: solid #5d666e; border-width: 0 1px; }
.ruler { position: relative; background: #1e292f; border-bottom: 1px solid #141c22; padding: 5px 0 0 97px; display: flex; overflow: hidden; font: 500 9px/14px "Roboto", sans-serif; color: #8e999e; }
.ruler > b, .ruler > span { flex: 0 0 137px; }
.ruler b { font-size: 10px; font-weight: 500; color: #a7b0b4; }
.marker { position: absolute; left: 784px; top: 2px; }
.vscroll { grid-row: 2 / 4; grid-column: 3; display: flex; flex-direction: column; background: #343b43; }
.vscroll button { height: 19px; }
.vscroll i { height: 31px; background: #4a535b; border: 1px solid #59626a; }
.vscroll .down { margin-top: auto; }
.tracks { grid-column: 1 / 3; position: relative; overflow: hidden; background: #1b2730; }
.track { display: flex; height: 53px; }
.track:nth-child(3n+1) { height: 52px; }
.head { width: 86px; flex: none; margin-right: 5px; background: #495158; border-radius: 0 7px 5px 0; border-top: 1px solid #555e64; display: flex; justify-content: space-between; font-size: 14px; line-height: 14px; color: #737c81; text-shadow: 0 0 1px currentColor; }
.led { align-self: flex-end; width: 11px; height: 11px; border-radius: 50%; margin: 0 2px 3px 0; background: #c5e580; border: 2px solid #4b6a26; outline: 1px solid #82ac3c; outline-offset: -1px; }
.lane {
  flex: 1; min-width: 0; display: flex; justify-content: flex-end;
  border-bottom: 2px solid #1c2d36;
  background:
    linear-gradient(90deg, #1b2b35 2px, transparent 2px) 96px 0/137px 100%,
    linear-gradient(90deg, transparent 34px, #23343e 34px, #23343e 35px, transparent 35px, transparent 68px, #23343e 68px, #23343e 69px, transparent 69px, transparent 103px, #23343e 103px, #23343e 104px, transparent 104px) 96px 0/137px 100%,
    linear-gradient(90deg, transparent 17px, #2a3b45 17px, #2a3b45 18px, transparent 18px, transparent 51px, #2a3b45 51px, #2a3b45 52px, transparent 52px, transparent 86px, #2a3b45 86px, #2a3b45 87px, transparent 87px, transparent 120px, #2a3b45 120px, #2a3b45 121px, transparent 121px) 96px 0/137px 100%,
    linear-gradient(90deg, #2d3e48 548px, #33454f 548px) 97px 0/1096px 100%;
}
.clip { flex: 1; min-width: 0; background: rgba(35, 45, 52, .8); overflow: hidden; }
.lane.first { box-shadow: -3px 0 #ccd5da; }
.clip-title { display: flex; align-items: center; gap: 2px; height: 13px; padding-left: 2px; background: #4a5259; border-top: 1px solid #59626a; font: 300 12px/12px "Open Sans", "Noto Sans CJK KR", sans-serif; color: #c8cfd2; white-space: nowrap; }
.notes { display: block; }
.clip.red { flex: 0 0 43px; background: #22313b; }
.red .clip-title { background: #962728; border-top-color: #a83232; color: #e8bcbc; font-weight: 400; font-size: 10px; }
.clip.red i { display: block; width: 17px; height: 3px; margin-top: 14px; background: #8fa090; }
.playhead { position: absolute; left: 873px; top: 13px; bottom: 0; width: 10px; background: linear-gradient(90deg, rgba(85, 125, 50, .5), rgba(110, 165, 45, .85)); border-right: 1px solid #b4e579; }
.desk { width: 22px; flex: none; background: #5a636b; border-left: 2px solid #343c43; }
.cursor { position: absolute; left: 610px; top: 125px; }
```
